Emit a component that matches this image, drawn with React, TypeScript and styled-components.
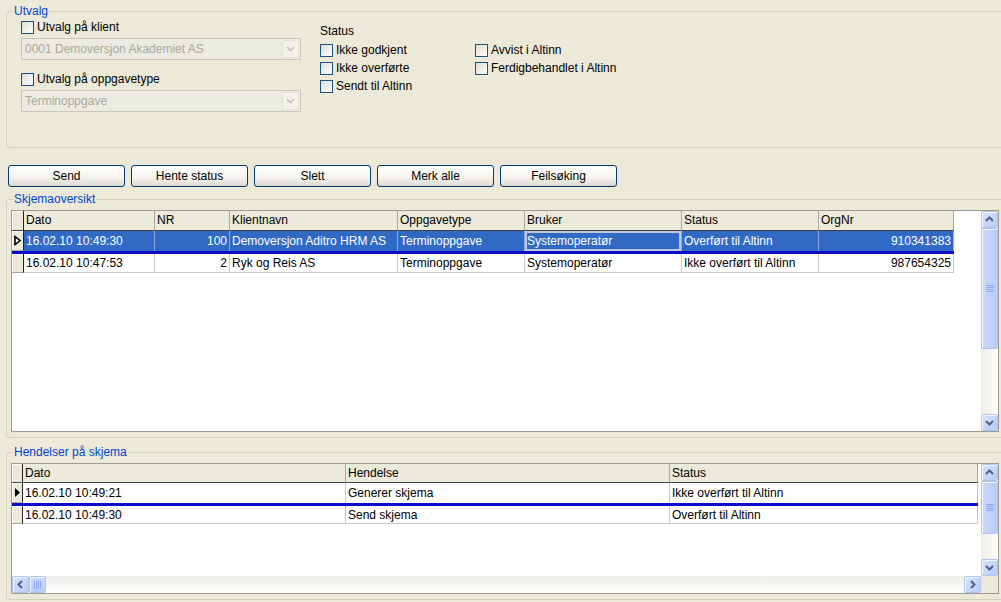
import React from 'react'
import styled, { createGlobalStyle } from 'styled-components'

const BG = '#ECE9D8'

const GlobalStyle = createGlobalStyle`
  html, body {
    margin: 0;
    padding: 0;
    overflow: hidden;
    background: ${BG};
  }
  body {
    font-family: "Liberation Sans", Arial, sans-serif;
    font-size: 12px;
    color: #000;
  }
  * { box-sizing: border-box; }
`

const Page = styled.div`
  width: 1010px;
  height: 602px;
  padding-top: 11px;
`

const GroupBox = styled.div<{ $height: number; $mt?: number }>`
  margin: ${p => p.$mt || 0}px 0 0 6px;
  width: 998px;
  height: ${p => p.$height}px;
  border: 1px solid #D0D0BF;
  border-radius: 3px;
`

const GroupTitle = styled.div`
  width: fit-content;
  margin: -8px 0 0 6px;
  padding: 0 1px;
  line-height: 14px;
  color: #0046D5;
  background: ${BG};
`

/* ---------- Utvalg ---------- */

const FilterArea = styled.div`
  display: flex;
  padding-left: 14px;
`

const FilterColumn = styled.div`
  width: 280px;
  display: flex;
  flex-direction: column;
`

const CheckRow = styled.label<{ $mt?: number }>`
  display: flex;
  align-items: center;
  gap: 3px;
  height: 13px;
  margin-top: ${p => p.$mt || 0}px;
  line-height: 13px;
  white-space: nowrap;
`

const CheckBox = styled.span`
  display: inline-block;
  width: 13px;
  height: 13px;
  flex: none;
  border: 1px solid #1C5180;
  background: linear-gradient(135deg, #DCDCD7 0%, #F4F4F1 70%, #FFFFFF 100%);
`

const Combo = styled.div<{ $mt?: number }>`
  display: flex;
  align-items: center;
  width: 280px;
  height: 22px;
  margin-top: ${p => p.$mt || 0}px;
  border: 1px solid #C9C7BA;
  background: #EBEBE4;
  padding: 1px;
`

const ComboText = styled.span`
  flex: 1;
  padding-left: 2px;
  color: #ACA899;
  white-space: nowrap;
`

const ComboButton = styled.span`
  display: flex;
  align-items: center;
  justify-content: center;
  width: 17px;
  height: 18px;
  border: 1px solid #E2E1DA;
  border-radius: 2px;
  background: #F2F1EC;
`

const StatusColumn = styled.div`
  margin-left: 19px;
  display: flex;
  flex-direction: column;
`

const StatusTitle = styled.div`
  margin-top: 6px;
  line-height: 14px;
`

const StatusGrid = styled.div`
  display: grid;
  grid-template-columns: 155px auto;
  grid-auto-flow: column;
  grid-template-rows: repeat(3, 13px);
  row-gap: 5px;
  margin-top: 6px;
`

/* ---------- buttons ---------- */

const ButtonRow = styled.div`
  display: flex;
  gap: 6px;
  margin: 17px 0 0 8px;
`

const Button = styled.button`
  width: 117px;
  height: 22px;
  padding: 0;
  border: 1px solid #003C74;
  border-radius: 3px;
  background: linear-gradient(180deg, #FFFFFF 0%, #F5F4EF 55%, #E3E1D8 90%, #D6D0C5 100%);
  font-family: inherit;
  font-size: 12px;
  color: #000;
`

/* ---------- grids ---------- */

const GridFrame = styled.div<{ $height: number }>`
  display: flex;
  flex-direction: column;
  margin: 4px 0 0 4px;
  width: 988px;
  height: ${p => p.$height}px;
  border: 1px solid #9C9B94;
  background: #fff;
`

const GridBody = styled.div`
  flex: 1;
  display: flex;
  min-height: 0;
`

const Table = styled.div`
  flex: 1;
  overflow: hidden;
`

const Row = styled.div<{ $h: number; $current?: boolean }>`
  display: flex;
  width: fit-content;
  height: ${p => p.$h + (p.$current ? 3 : 0)}px;
  border-bottom: ${p => (p.$current ? '3px solid #0A0ACD' : 'none')};
`

const HeadCell = styled.div<{ $w: number; $h: number }>`
  width: ${p => p.$w}px;
  padding-left: 2px;
  background: #EBEADB;
  border-right: 1px solid #ACA899;
  border-bottom: 1px solid #404040;
  line-height: ${p => p.$h - 1}px;
  white-space: nowrap;
  overflow: hidden;
`

const Cell = styled.div<{ $w: number; $right?: boolean; $selected?: boolean; $focus?: boolean; $current?: boolean }>`
  width: ${p => p.$w}px;
  padding: 0 2px;
  text-align: ${p => (p.$right ? 'right' : 'left')};
  white-space: nowrap;
  overflow: hidden;
  display: flex;
  align-items: center;
  justify-content: ${p => (p.$right ? 'flex-end' : 'flex-start')};
  color: ${p => (p.$selected ? '#fff' : '#000')};
  background: ${p => (p.$selected ? '#316AC5' : '#fff')};
  border-right: 1px solid ${p => (p.$selected ? '#8FA9DC' : '#C8C8C8')};
  border-bottom: ${p => (p.$current ? 'none' : '1px solid #C8C8C8')};
  box-shadow: ${p => (p.$focus ? 'inset 0 0 0 2px #BFC7D9' : 'none')};
`

const Indicator = styled.div<{ $w: number; $head?: boolean }>`
  display: flex;
  align-items: center;
  justify-content: center;
  width: ${p => p.$w}px;
  background: ${BG};
  border-right: 1px solid #222;
  border-bottom: 1px solid ${p => (p.$head ? '#404040' : '#ACA899')};
  box-shadow: inset 1px 1px 0 #fff;
`

/* ---------- scrollbars ---------- */

const VScroll = styled.div`
  width: 17px;
  display: flex;
  flex-direction: column;
  background: linear-gradient(90deg, #EEEDE5, #FEFEFB);
`

const HScrollRow = styled.div`
  display: flex;
  height: 17px;
`

const HScroll = styled.div`
  flex: 1;
  display: flex;
  background: linear-gradient(180deg, #EEEDE5, #FEFEFB);
`

const Corner = styled.div`
  width: 17px;
  background: ${BG};
`

const ScrollBtn = styled.div`
  flex: none;
  display: flex;
  align-items: center;
  justify-content: center;
  width: 17px;
  height: 17px;
  border: 1px solid #AFC3EE;
  border-radius: 2px;
  box-shadow: inset 1px 1px 0 #F4F8FF;
  background: linear-gradient(135deg, #D5E1FD 0%, #BACDF8 100%);
`

const Thumb = styled.div<{ $size: number; $horizontal?: boolean }>`
  flex: none;
  display: flex;
  align-items: center;
  justify-content: center;
  width: ${p => (p.$horizontal ? `${p.$size}px` : '17px')};
  height: ${p => (p.$horizontal ? '17px' : `${p.$size}px`)};
  border: 1px solid #AFC3EE;
  border-radius: 2px;
  box-shadow: inset 1px 1px 0 #F4F8FF;
  background: ${p =>
    p.$horizontal
      ? 'linear-gradient(180deg, #CCDAFC 0%, #B9CCF8 100%)'
      : 'linear-gradient(90deg, #CCDAFC 0%, #B9CCF8 100%)'};
`

const Spacer = styled.div`
  flex: 1;
`

const Arrow = ({ dir }: { dir: 'up' | 'down' | 'left' | 'right' }) => {
  const pts = {
    up: '1,5 4.5,1.5 8,5',
    down: '1,2 4.5,5.5 8,2',
    left: '5,1 1.5,4.5 5,8',
    right: '2,1 5.5,4.5 2,8',
  }[dir]
  const vertical = dir === 'up' || dir === 'down'
  return (
    <svg width={vertical ? 9 : 7} height={vertical ? 7 : 9} viewBox={vertical ? '0 0 9 7' : '0 0 7 9'}>
      <polyline points={pts} fill="none" stroke="#4D6185" strokeWidth="2" />
    </svg>
  )
}

const Grip = ({ horizontal }: { horizontal?: boolean }) => (
  <svg width={8} height={8} viewBox="0 0 8 8">
    {[0, 2, 4, 6].map(i =>
      horizontal ? (
        <line key={i} x1={i + 0.5} y1="0" x2={i + 0.5} y2="8" stroke="#8CA8E8" strokeWidth="1" />
      ) : (
        <line key={i} x1="0" y1={i + 0.5} x2="8" y2={i + 0.5} stroke="#8CA8E8" strokeWidth="1" />
      )
    )}
  </svg>
)

const VerticalScrollbar = ({ thumb }: { thumb: number }) => (
  <VScroll>
    <ScrollBtn><Arrow dir="up" /></ScrollBtn>
    <Thumb $size={thumb}><Grip /></Thumb>
    <Spacer />
    <ScrollBtn><Arrow dir="down" /></ScrollBtn>
  </VScroll>
)

const ChevronDown = () => (
  <svg width="9" height="6" viewBox="0 0 9 6">
    <polyline points="1,1 4.5,4.5 8,1" fill="none" stroke="#C4C3BA" strokeWidth="1.6" />
  </svg>
)

const RowPointer = ({ hollow }: { hollow?: boolean }) => (
  <svg width="7" height="11" viewBox="0 0 7 11">
    {hollow ? (
      <polygon points="1,1.5 6,5.5 1,9.5" fill="#fff" stroke="#000" strokeWidth="1.6" strokeLinejoin="miter" />
    ) : (
      <polygon points="1,1 6,5.5 1,10" fill="#000" />
    )}
  </svg>
)

/* ---------- data ---------- */

type Col = { title: string; w: number; right?: boolean }

const overviewCols: Col[] = [
  { title: 'Dato', w: 131 },
  { title: 'NR', w: 75, right: true },
  { title: 'Klientnavn', w: 168 },
  { title: 'Oppgavetype', w: 127 },
  { title: 'Bruker', w: 157 },
  { title: 'Status', w: 137 },
  { title: 'OrgNr', w: 135, right: true },
]

const overviewRows = [
  ['16.02.10 10:49:30', '100', 'Demoversjon Aditro HRM AS', 'Terminoppgave', 'Systemoperatør', 'Overført til Altinn', '910341383'],
  ['16.02.10 10:47:53', '2', 'Ryk og Reis AS', 'Terminoppgave', 'Systemoperatør', 'Ikke overført til Altinn', '987654325'],
]

const eventCols: Col[] = [
  { title: 'Dato', w: 323 },
  { title: 'Hendelse', w: 324 },
  { title: 'Status', w: 308 },
]

const eventRows = [
  ['16.02.10 10:49:21', 'Generer skjema', 'Ikke overført til Altinn'],
  ['16.02.10 10:49:30', 'Send skjema', 'Overført til Altinn'],
]

const DataTable = ({ cols, rows, indicator, headH, rowH, selectRow, focusCol, hollow }: {
  cols: Col[]
  rows: string[][]
  indicator: number
  headH: number
  rowH: number
  selectRow?: boolean
  focusCol?: number
  hollow?: boolean
}) => (
  <Table>
    <Row $h={headH}>
      <Indicator $w={indicator} $head />
      {cols.map(c => (
        <HeadCell key={c.title} $w={c.w} $h={headH}>{c.title}</HeadCell>
      ))}
    </Row>
    {rows.map((r, ri) => {
      const current = ri === 0
      return (
        <Row key={ri} $h={current ? 20 : rowH} $current={current}>
          <Indicator $w={indicator}>{current && <RowPointer hollow={hollow} />}</Indicator>
          {cols.map((c, ci) => (
            <Cell
              key={c.title}
              $w={c.w}
              $right={c.right}
              $current={current}
              $selected={current && selectRow}
              $focus={current && selectRow && ci === focusCol}
            >
              {r[ci]}
            </Cell>
          ))}
        </Row>
      )
    })}
  </Table>
)

export default function App() {
  return (
    <Page>
      <GlobalStyle />
      <GroupBox $height={137}>
        <GroupTitle>Utvalg</GroupTitle>
        <FilterArea>
          <FilterColumn>
            <CheckRow $mt={3}><CheckBox />Utvalg på klient</CheckRow>
            <Combo $mt={4}>
              <ComboText>0001 Demoversjon Akademiet AS</ComboText>
              <ComboButton><ChevronDown /></ComboButton>
            </Combo>
            <CheckRow $mt={13}><CheckBox />Utvalg på oppgavetype</CheckRow>
            <Combo $mt={4}>
              <ComboText>Terminoppgave</ComboText>
              <ComboButton><ChevronDown /></ComboButton>
            </Combo>
          </FilterColumn>
          <StatusColumn>
            <StatusTitle>Status</StatusTitle>
            <StatusGrid>
              <CheckRow><CheckBox />Ikke godkjent</CheckRow>
              <CheckRow><CheckBox />Ikke overførte</CheckRow>
              <CheckRow><CheckBox />Sendt til Altinn</CheckRow>
              <CheckRow><CheckBox />Avvist i Altinn</CheckRow>
              <CheckRow><CheckBox />Ferdigbehandlet i Altinn</CheckRow>
            </StatusGrid>
          </StatusColumn>
        </FilterArea>
      </GroupBox>

      <ButtonRow>
        <Button>Send</Button>
        <Button>Hente status</Button>
        <Button>Slett</Button>
        <Button>Merk alle</Button>
        <Button>Feilsøking</Button>
      </ButtonRow>

      <GroupBox $height={239} $mt={12}>
        <GroupTitle>Skjemaoversikt</GroupTitle>
        <GridFrame $height={222}>
          <GridBody>
            <DataTable cols={overviewCols} rows={overviewRows} indicator={12} headH={20} rowH={19} selectRow focusCol={4} hollow />
            <VerticalScrollbar thumb={121} />
          </GridBody>
        </GridFrame>
      </GroupBox>

      <GroupBox $height={148} $mt={14}>
        <GroupTitle>Hendelser på skjema</GroupTitle>
        <GridFrame $height={131}>
          <GridBody>
            <DataTable cols={eventCols} rows={eventRows} indicator={11} headH={19} rowH={18} />
            <VerticalScrollbar thumb={53} />
          </GridBody>
          <HScrollRow>
            <HScroll>
              <ScrollBtn><Arrow dir="left" /></ScrollBtn>
              <Thumb $size={17} $horizontal><Grip horizontal /></Thumb>
              <Spacer />
              <ScrollBtn><Arrow dir="right" /></ScrollBtn>
            </HScroll>
            <Corner />
          </HScrollRow>
        </GridFrame>
      </GroupBox>
    </Page>
  )
}
